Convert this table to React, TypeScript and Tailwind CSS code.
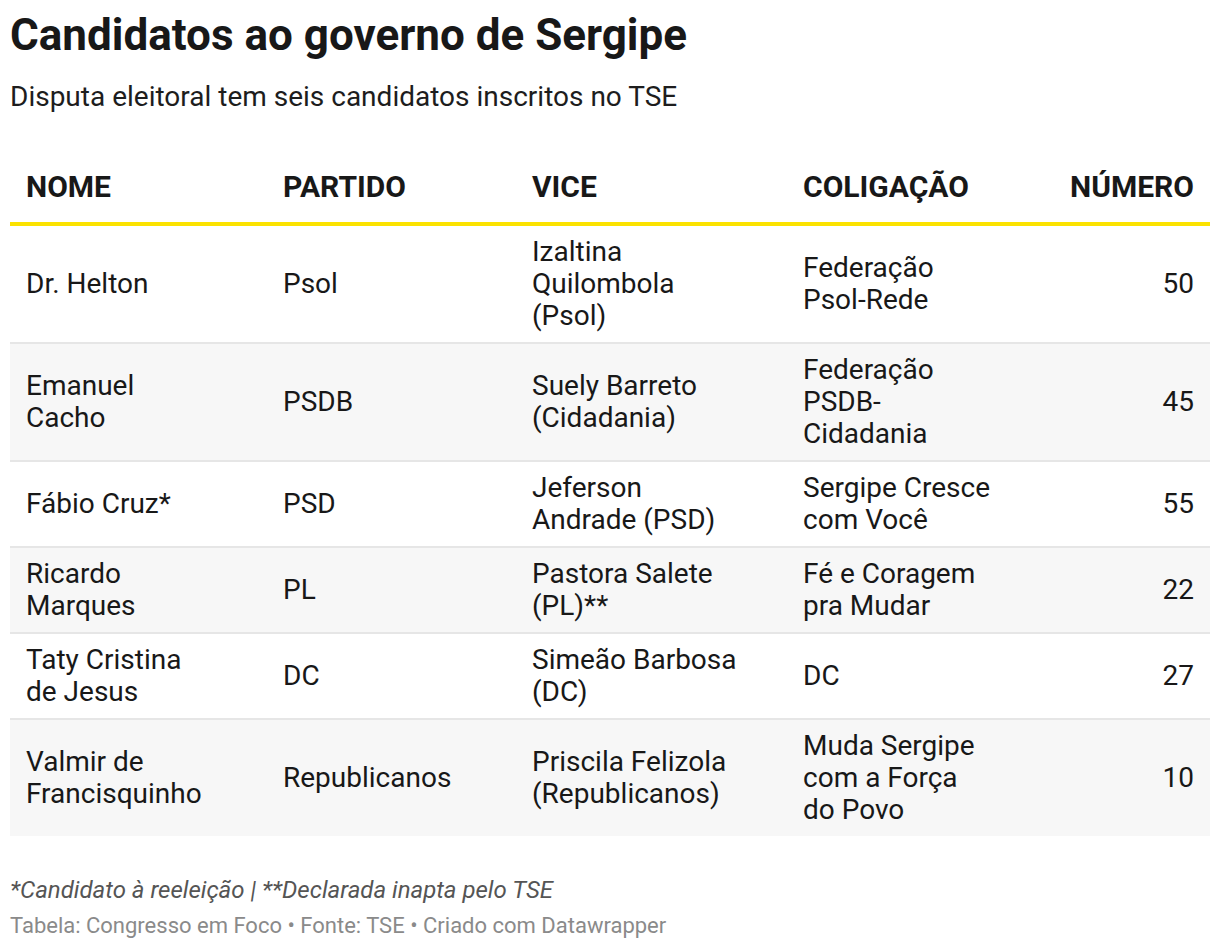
import React from "react";

type Row = {
  nome: string;
  partido: string;
  vice: string;
  coligacao: string;
  numero: string;
};

const rows: Row[] = [
  { nome: "Dr. Helton", partido: "Psol", vice: "Izaltina Quilombola (Psol)", coligacao: "Federação Psol-Rede", numero: "50" },
  { nome: "Emanuel Cacho", partido: "PSDB", vice: "Suely Barreto (Cidadania)", coligacao: "Federação PSDB-Cidadania", numero: "45" },
  { nome: "Fábio Cruz*", partido: "PSD", vice: "Jeferson Andrade (PSD)", coligacao: "Sergipe Cresce com Você", numero: "55" },
  { nome: "Ricardo Marques", partido: "PL", vice: "Pastora Salete (PL)**", coligacao: "Fé e Coragem pra Mudar", numero: "22" },
  { nome: "Taty Cristina de Jesus", partido: "DC", vice: "Simeão Barbosa (DC)", coligacao: "DC", numero: "27" },
  { nome: "Valmir de Francisquinho", partido: "Republicanos", vice: "Priscila Felizola (Republicanos)", coligacao: "Muda Sergipe com a Força do Povo", numero: "10" },
];

const cols = "grid grid-cols-[257px_249px_271px_250px_1fr]";

export default function App() {
  return (
    <div className="min-h-[950px] bg-white px-[10px] pt-[10px] text-[#181818] font-['Roboto',sans-serif]">
      <h1 className="text-[44px] font-bold leading-[50px]">Candidatos ao governo de Sergipe</h1>
      <p className="mt-[21px] text-[28px] leading-[32px] text-[#1d1d1d]">
        Disputa eleitoral tem seis candidatos inscritos no TSE
      </p>

      <div className="mt-[58px]">
        <div className={`${cols} border-b-4 border-[#fbe200] pb-[19px] text-[30px] font-bold leading-[32px] uppercase`}>
          <div className="pl-[16px]">Nome</div>
          <div className="pl-[16px]">Partido</div>
          <div className="pl-[16px]">Vice</div>
          <div className="pl-[16px]">Coligação</div>
          <div className="pr-[16px] text-right">Número</div>
        </div>

        {rows.map((r, i) => (
          <div
            key={r.nome}
            className={`${cols} items-center py-[10px] text-[28px] leading-[32px] ${
              i % 2 === 1 ? "bg-[#f7f7f7]" : "bg-white"
            } ${i < rows.length - 1 ? "border-b-2 border-[#e6e6e6]" : ""}`}
          >
            <div className="pl-[16px]">
              <div className="max-w-[184px]">{r.nome}</div>
            </div>
            <div className="pl-[16px]">{r.partido}</div>
            <div className="pl-[16px]">
              <div className="max-w-[205px]">{r.vice}</div>
            </div>
            <div className="pl-[16px]">
              <div className="max-w-[188px]">{r.coligacao}</div>
            </div>
            <div className="pr-[16px] text-right">{r.numero}</div>
          </div>
        ))}
      </div>

      <p className="mt-[38px] text-[24px] italic leading-[32px] text-[#555555]">
        *Candidato à reeleição | **Declarada inapta pelo TSE
      </p>
      <p className="mt-[6px] text-[22px] leading-[28px] text-[#8a8a8a]">
        Tabela: Congresso em Foco • Fonte: TSE • Criado com Datawrapper
      </p>
    </div>
  );
}
